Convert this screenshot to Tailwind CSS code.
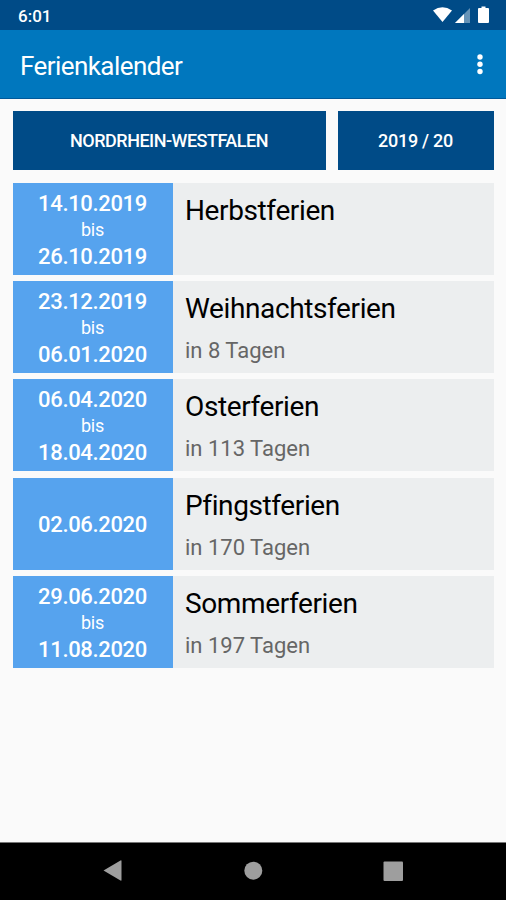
<!DOCTYPE html>
<html lang="de">
<head>
<meta charset="utf-8">
<title>Ferienkalender</title>
<script src="https://cdn.jsdelivr.net/npm/@tailwindcss/browser@4"></script>
</head>
<body class="w-[506px] h-[900px] overflow-hidden flex flex-col bg-[#fafafa] font-['Roboto',sans-serif]">
<div class="h-[30px] shrink-0 bg-[#004b87] flex items-center justify-between pl-[18px] pr-[16px] text-white">
  <span class="text-[17px] font-medium leading-5 pt-px">6:01</span>
  <svg class="w-[58px] h-[20px]" viewBox="0 0 58 20" fill="#fff">
    <path d="M1 5.500Q10.500-1 20 5.500L10.500 17Z"/>
    <path d="M38 3V18H23Z" opacity=".4"/><path d="M32 9V18H23Z"/>
    <path d="M47 3h2.500V1.500h4V3H56q1 0 1 1v13q0 1-1 1h-9q-1 0-1-1V4q0-1 1-1Z"/>
  </svg>
</div>
<header class="h-[69px] shrink-0 bg-[#0077be] border-b border-[#00599a] flex items-center justify-between pl-5 pr-[23px] text-white">
  <h1 class="text-[26px] leading-8 pt-[3px] tracking-[-0.570px]">Ferienkalender</h1>
  <svg class="w-[6px] h-[22px]" viewBox="0 0 6 22" fill="#fff"><circle cx="3" cy="4" r="2.700"/><circle cx="3" cy="11.200" r="2.700"/><circle cx="3" cy="18.500" r="2.700"/></svg>
</header>
<main class="flex-1 px-[12.500px] pt-[12px]">
  <div class="flex gap-[12px] h-[59px] text-white text-[18px] font-medium">
    <button class="w-[313px] bg-[#004b87] tracking-[-0.500px]">NORDRHEIN-WESTFALEN</button>
    <button class="flex-1 bg-[#004b87] tracking-[-0.250px]">2019 / 20</button>
  </div>
  <div id="list" class="mt-[12.600px] flex flex-col gap-[6.400px]"></div>
</main>
<nav class="h-[58px] shrink-0 bg-black border-t border-[#777] flex items-center pb-px">
  <svg class="w-full h-[56px]" viewBox="0 0 506 56" fill="#9e9e9e"><path d="M103.500 27.500 120.500 17.500q1-.5 1 .5V37q0 1-1 .5Z"/><circle cx="253.300" cy="27.700" r="9"/><rect x="383.500" y="18.500" width="19.500" height="19.500" rx="1"/></svg>
</nav>
<script>
const holidays = [
  ['14.10.2019', '26.10.2019', 'Herbstferien', ''],
  ['23.12.2019', '06.01.2020', 'Weihnachtsferien', 'in 8 Tagen'],
  ['06.04.2020', '18.04.2020', 'Osterferien', 'in 113 Tagen'],
  ['02.06.2020', '', 'Pfingstferien', 'in 170 Tagen'],
  ['29.06.2020', '11.08.2020', 'Sommerferien', 'in 197 Tagen'],
];
document.getElementById('list').innerHTML = holidays.map(([from, to, name, days]) => `
  <div class="flex h-[92px] bg-[#eceeef]">
    <div class="w-[160px] bg-[#56a3ee] text-white flex flex-col items-center justify-center pt-[2px] text-[22px] leading-[27px] font-medium">
      <span class="tracking-[-0.350px]">${from}</span>${to ? `<span class="text-[18px] leading-[26px] font-normal tracking-[-0.200px]">bis</span><span class="tracking-[-0.350px]">${to}</span>` : ''}
    </div>
    <div class="pl-[12.500px] pt-[10px]">
      <div class="text-[28px] leading-9 text-black tracking-[-0.380px]">${name}</div>
      <div class="mt-[10px] text-[22px] leading-7 text-[#666]">${days}</div>
    </div>
  </div>`).join('');
</script>
</body>
</html>
